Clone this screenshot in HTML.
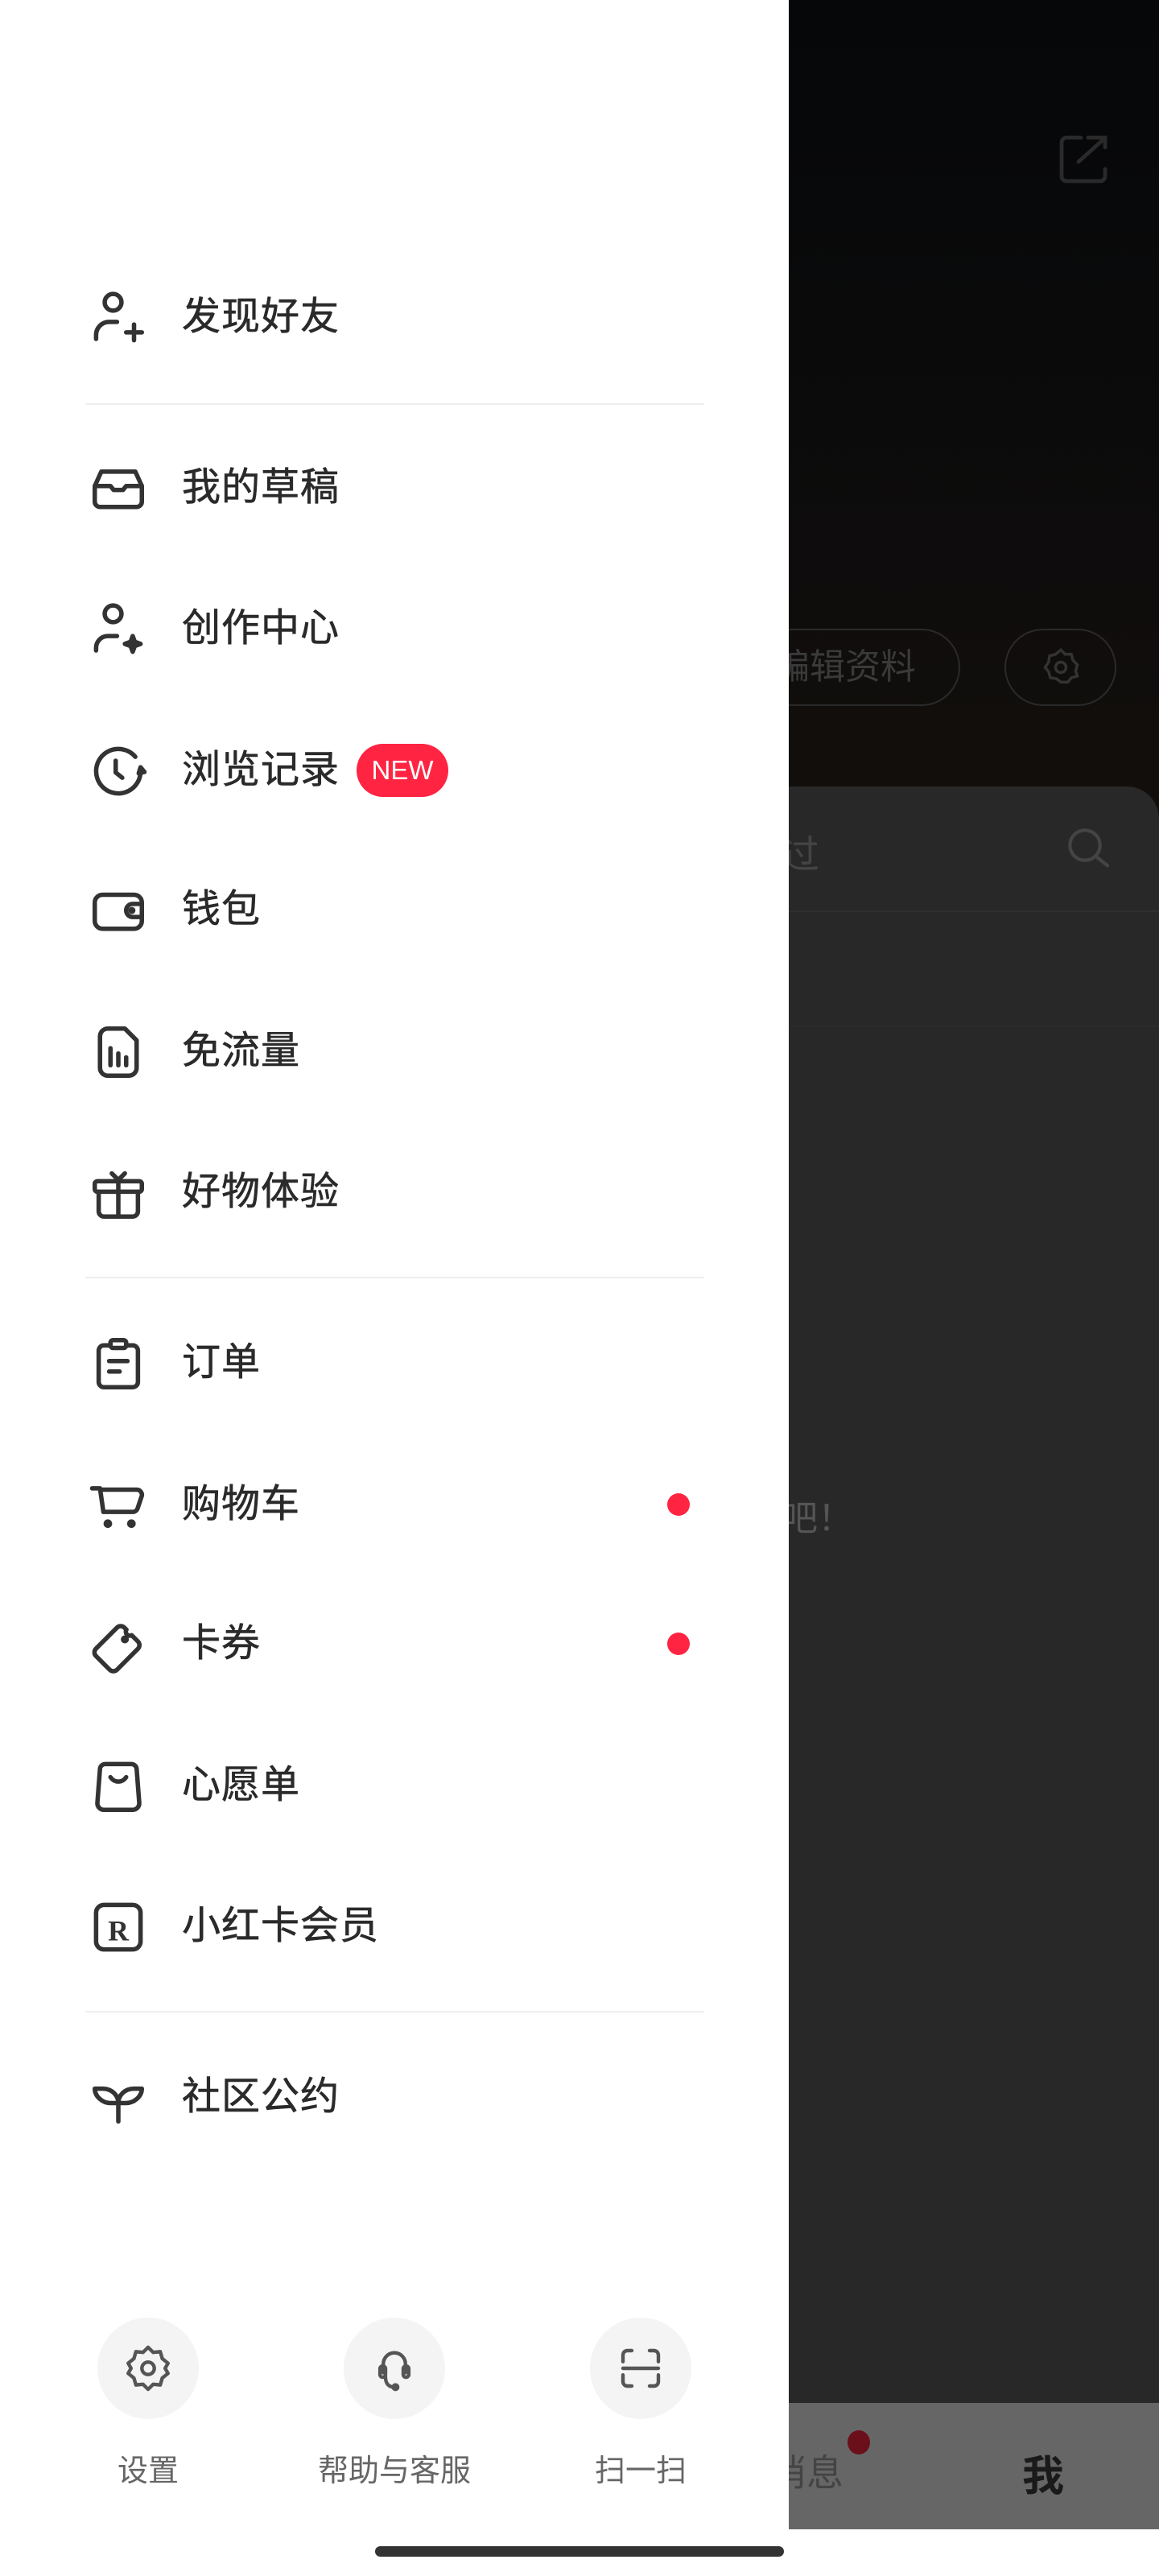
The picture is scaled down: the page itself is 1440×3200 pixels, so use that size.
<!DOCTYPE html>
<html><head><meta charset="utf-8"><style>
*{margin:0;padding:0;box-sizing:border-box}
body{width:1440px;height:3200px;position:relative;background:#fff;font-family:"Liberation Sans","Noto Sans CJK SC",sans-serif;overflow:hidden}
.abs{position:absolute}
.right{position:absolute;left:980px;top:0;width:460px;height:3200px;overflow:hidden;background:linear-gradient(#050709 0,#0a0a0b 400px,#110e0c 900px,#110e0c 977px)}
.item{position:absolute;left:0;width:980px;height:100px}
.item svg{position:absolute;left:108px;top:12px;width:78px;height:78px;fill:none;stroke:#333;stroke-width:1.7;stroke-linecap:round;stroke-linejoin:round}
.item span{position:absolute;left:226px;top:21px;font-size:48px;color:#2a2a2a;line-height:58px;letter-spacing:1px;-webkit-text-stroke:0.6px #2a2a2a}
.div{position:absolute;left:106px;width:769px;height:2px;background:#eee}
.dot{position:absolute;left:829px;width:28px;height:28px;border-radius:50%;background:#ff2442}
.bc{position:absolute;top:2879px;width:126px;height:126px;border-radius:50%;background:#f4f4f4}
.bc svg{position:absolute;left:30px;top:30px;width:66px;height:66px;fill:none;stroke:#555;stroke-width:1.6;stroke-linecap:round;stroke-linejoin:round}
.bl{position:absolute;top:3038px;width:300px;text-align:center;font-size:38px;color:#666}
</style></head><body>
<div class="right">
 <svg class="abs" style="left:330px;top:162px;width:72px;height:72px" viewBox="0 0 24 24" fill="none" stroke="#2a2a2a" stroke-width="1.6" stroke-linecap="round"><path d="M11 3H5a2 2 0 0 0-2 2v14a2 2 0 0 0 2 2h14a2 2 0 0 0 2-2v-3M10 13L20 4M14 3h7v4"/></svg>
 <div class="abs" style="left:-80px;top:781px;width:293px;height:96px;border:2px solid #2a2a2a;border-radius:48px;color:#3a3a3a;font-size:44px;line-height:92px;padding-left:60px">编辑资料</div>
 <div class="abs" style="left:268px;top:781px;width:139px;height:96px;border:2px solid #2a2a2a;border-radius:48px"></div>
 <svg class="abs" style="left:312px;top:803px;width:52px;height:52px" viewBox="0 0 24 24" fill="none" stroke="#333" stroke-width="1.6"><circle cx="12" cy="12" r="3"/><path d="M12 2l2.5 2.5h3.5l1 3.5 2.5 2.5-1 3.5 1 3-3.5 1-2 2.5H12l-2.5-2-3.5-.5-1-3.5L3 12l2-3 .5-3.5 3.5-1z"/></svg>
 <div class="abs" style="left:0;top:977px;width:460px;height:2008px;background:#282828;border-top-right-radius:40px"></div>
 <div class="abs" style="left:-10px;top:1022px;font-size:48px;color:#444">过</div>
 <svg class="abs" style="left:340px;top:1022px;width:64px;height:64px" viewBox="0 0 24 24" fill="none" stroke="#444" stroke-width="1.6" stroke-linecap="round"><circle cx="10.5" cy="10.5" r="7"/><path d="M16 16l5 4"/></svg>
 <div class="abs" style="left:0;top:1131px;width:460px;height:2px;background:#2f2f2f"></div>
 <div class="abs" style="left:0;top:1274px;width:460px;height:2px;background:#2c2c2c"></div>
 <div class="abs" style="left:-8px;top:1850px;font-size:44px;color:#555">吧！</div>
 <div class="abs" style="left:0;top:2985px;width:460px;height:157px;background:#666"></div>
 <div class="abs" style="left:-24px;top:3036px;font-size:46px;color:#444">消息</div>
 <div class="abs" style="left:73px;top:3019px;width:28px;height:30px;border-radius:50%;background:#6b0f1a"></div>
 <div class="abs" style="left:290px;top:3034px;font-size:52px;font-weight:bold;color:#1a1a1a">我</div>
 <div class="abs" style="left:0;top:3142px;width:460px;height:58px;background:#fff"></div>
</div>

<div class="item" style="top:344px"><svg viewBox="0 0 24 24"><circle cx="10" cy="6" r="3.2"/><path d="M3.5 20v-1.5a5 5 0 0 1 5-5h3M15 17.5h6M18 14.5v6"/></svg><span>发现好友</span></div>
<div class="div" style="top:501px"></div>
<div class="item" style="top:556px"><svg viewBox="0 0 24 24"><path d="M3 11l2.5-5.5h13L21 11v6a2 2 0 0 1-2 2H5a2 2 0 0 1-2-2z"/><path d="M3 11h6l1.2 1.5h3.6L15 11h6"/></svg><span>我的草稿</span></div>
<div class="item" style="top:731px"><svg viewBox="0 0 24 24"><circle cx="10" cy="6" r="3.2"/><path d="M3.5 20v-1a4.5 4.5 0 0 1 4.5-4.5h3.5"/><path d="M17.5 14.5l.8 2.2 2.2.8-2.2.8-.8 2.2-.8-2.2-2.2-.8 2.2-.8z" fill="#333"/></svg><span>创作中心</span></div>
<div class="item" style="top:907px"><svg viewBox="0 0 24 24"><path d="M20.5 12.5A8.5 8.5 0 1 1 18.5 6.5"/><path d="M11 8v4.5l2.5 2"/><path d="M20.5 10.5l1.5 1.8-2.2.5z" fill="#333"/></svg><span>浏览记录</span>
 <div class="abs" style="left:443px;top:17px;width:114px;height:66px;border-radius:33px;background:#ff2442;color:#fff;font-size:33px;line-height:66px;text-align:center">NEW</div></div>
<div class="item" style="top:1080px"><svg viewBox="0 0 24 24"><rect x="3" y="6" width="18" height="13" rx="3"/><path d="M21 9.5h-3.5a2.5 2.5 0 0 0 0 5H21"/><circle cx="17.2" cy="12" r=".5" fill="#333"/></svg><span>钱包</span></div>
<div class="item" style="top:1256px"><svg viewBox="0 0 24 24"><path d="M8 3h6.5L19 7.5V18a3 3 0 0 1-3 3H8a3 3 0 0 1-3-3V6a3 3 0 0 1 3-3z"/><path d="M9 10.5v6.5M12 12.5v4.5M15 14v3"/></svg><span>免流量</span></div>
<div class="item" style="top:1431px"><svg viewBox="0 0 24 24"><rect x="3" y="7.5" width="18" height="4" rx="1"/><path d="M4.5 11.5V19a2 2 0 0 0 2 2h11a2 2 0 0 0 2-2v-7.5M12 7.5V21M9.5 4.5L12 7l2.5-2.5"/></svg><span>好物体验</span></div>
<div class="div" style="top:1586px"></div>
<div class="item" style="top:1643px"><svg viewBox="0 0 24 24"><rect x="4.5" y="5" width="15" height="16" rx="2"/><rect x="9" y="3" width="6" height="3" rx="1" fill="#fff"/><path d="M8.5 11h7M8.5 15h4"/></svg><span>订单</span></div>
<div class="item" style="top:1819px"><svg viewBox="0 0 24 24"><path d="M2 5.5h3l1.3 9h11.2a2 2 0 0 0 1.9-1.4l1.4-4.2A2 2 0 0 0 18.9 6H5.2"/><circle cx="8" cy="19" r=".8" fill="#333"/><circle cx="17" cy="19" r=".8" fill="#333"/></svg><span>购物车</span><div class="dot" style="top:36px"></div></div>
<div class="item" style="top:1992px"><svg viewBox="0 0 24 24"><path d="M3.5 13.5l8-8a2 2 0 0 1 2.8 0l.8.8a1.5 1.5 0 0 0 2 2.1l.2.2 2.2 2.2a2 2 0 0 1 0 2.8l-8 8a2 2 0 0 1-2.8 0l-5.2-5.2a2 2 0 0 1 0-2.9z"/><circle cx="14.5" cy="10" r=".7" fill="#333"/></svg><span>卡券</span><div class="dot" style="top:36px"></div></div>
<div class="item" style="top:2168px"><svg viewBox="0 0 24 24"><path d="M7 3.5h10a2 2 0 0 1 2 1.8l1 13a2.5 2.5 0 0 1-2.5 2.7h-11A2.5 2.5 0 0 1 4 18.3l1-13a2 2 0 0 1 2-1.8z"/><path d="M9 8.5a3.5 3.5 0 0 0 6 0"/></svg><span>心愿单</span></div>
<div class="item" style="top:2343px"><svg viewBox="0 0 24 24"><rect x="3.5" y="3.5" width="17" height="17" rx="3"/><text x="12" y="17" font-family="Liberation Serif,serif" font-size="11" font-weight="bold" fill="#333" stroke="none" text-anchor="middle">R</text></svg><span>小红卡会员</span></div>
<div class="div" style="top:2498px"></div>
<div class="item" style="top:2555px"><svg viewBox="0 0 24 24"><path d="M12 21v-7c0-3-2.5-5.5-6-5.5H3c0 3 3 5.5 6 5.5h3M12 14c0-3 2.5-5.5 6-5.5h3c0 3-3 5.5-6 5.5h-3"/></svg><span>社区公约</span></div>

<div class="bc" style="left:121px"><svg viewBox="0 0 24 24"><circle cx="12" cy="12" r="2.8"/><path d="M12 2.5l2.3 2.3 3.2-.3.9 3.1 2.6 2.1-1.3 2.3 1.3 2.3-2.6 2.1-.9 3.1-3.2-.3L12 21.5l-2.3-2.3-3.2.3-.9-3.1-2.6-2.1 1.3-2.3-1.3-2.3 2.6-2.1.9-3.1 3.2.3z"/></svg></div>
<div class="bc" style="left:427px"><svg viewBox="0 0 24 24"><path d="M7 14v-4a5 5 0 0 1 10 0v4"/><rect x="5.5" y="11" width="2.5" height="5" rx="1.2"/><rect x="16" y="11" width="2.5" height="5" rx="1.2"/><path d="M8 16c0 3 1.5 4.5 4 4.5"/><circle cx="12.5" cy="20.5" r="1"/></svg></div>
<div class="bc" style="left:733px"><svg viewBox="0 0 24 24"><path d="M4 9V6a2 2 0 0 1 2-2h2M16 4h2a2 2 0 0 1 2 2v3M20 15v3a2 2 0 0 1-2 2h-2M8 20H6a2 2 0 0 1-2-2v-3M4 12h16"/></svg></div>
<div class="bl" style="left:34px">设置</div>
<div class="bl" style="left:340px">帮助与客服</div>
<div class="bl" style="left:646px">扫一扫</div>
<div class="abs" style="left:466px;top:3163px;width:508px;height:13px;border-radius:7px;background:#333"></div>
</body></html>
